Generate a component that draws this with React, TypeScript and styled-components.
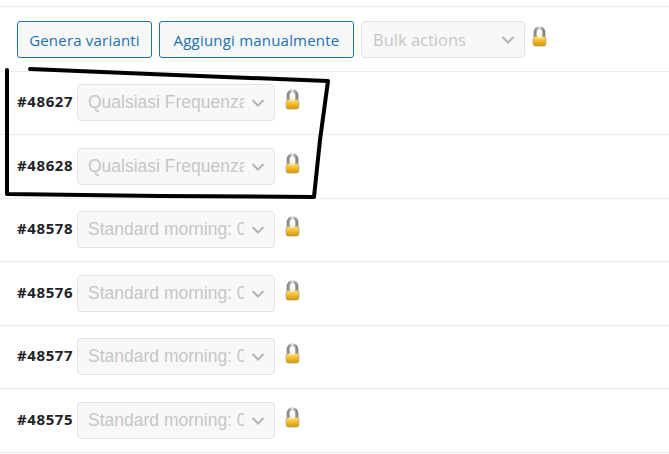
import { FC } from 'react';
import styled, { createGlobalStyle } from 'styled-components';

const GlobalStyle = createGlobalStyle`
  html, body {
    margin: 0;
    padding: 0;
    background: #fff;
    overflow: hidden;
  }
  body {
    font-family: "Open Sans", "Noto Sans", sans-serif;
  }
`

const Page = styled.div`
  position: relative;
  width: 669px;
  height: 454px;
  padding-top: 6px;
  box-sizing: border-box;
  overflow: hidden;
`
const Toolbar = styled.div`
  display: flex;
  align-items: flex-start;
  gap: 7px;
  height: 64.8px;
  box-sizing: border-box;
  padding: 14px 0 0 17px;
  border-top: 1px solid #ececec;
`
const ActionButton = styled.button<{ $width: number }>`
  width: ${({ $width }) => $width}px;
  height: 37px;
  padding: 0;
  border: 1px solid #2271b1;
  border-radius: 3px;
  background: #f6f7f7;
  color: #2271b1;
  font-family: "Open Sans", sans-serif;
  font-size: 15px;
  letter-spacing: 0.2px;
  white-space: nowrap;
`
const Row = styled.div`
  display: flex;
  align-items: flex-start;
  gap: 4px;
  height: 63.5px;
  box-sizing: border-box;
  padding: 12.5px 0 0 17px;
  border-top: 1px solid #ececec;
`
const VariantId = styled.span`
  width: 56px;
  height: 37px;
  line-height: 34px;
  font-size: 15px;
  font-weight: 700;
  letter-spacing: 0.6px;
  color: #1d2327;
  white-space: nowrap;
`
const SelectBox = styled.div<{ $width: number; $bulk?: boolean }>`
  position: relative;
  width: ${({ $width }) => $width}px;
  height: 37px;
  flex: none;
  box-sizing: border-box;
  padding-left: ${({ $bulk }) => ($bulk ? '11px' : '10px')};
  border: 1px solid #e2e2e2;
  border-radius: 4px;
  background: #f8f8f8;
  color: #c6c6c6;
  font-family: ${({ $bulk }) => ($bulk ? '"Open Sans", sans-serif' : '"Liberation Sans", sans-serif')};
  font-size: ${({ $bulk }) => ($bulk ? '16.5px' : '17.5px')};
  line-height: ${({ $bulk }) => ($bulk ? '36px' : '35px')};
`
const SelectText = styled.span`
  display: block;
  width: 156px;
  overflow: hidden;
  white-space: nowrap;
`
const Chevron = styled.svg`
  position: absolute;
  right: 9px;
  top: 13px;
  width: 14px;
  height: 10px;
`
const LockIcon = styled.svg<{ $left: number; $top: number }>`
  width: 15px;
  height: 21px;
  flex: none;
  margin-left: ${({ $left }) => $left}px;
  margin-top: ${({ $top }) => $top}px;
`
const Scribble = styled.svg`
  position: absolute;
  left: 0;
  top: 0;
  pointer-events: none;
`

const Lock: FC<{ left?: number; top?: number }> = ({ left = 6, top = 5 }) => (
  <LockIcon $left={left} $top={top} viewBox="0 0 15 21">
    <defs>
      <linearGradient id="shackle" x1="0" x2="1" y1="0" y2="0">
        <stop offset="0" stopColor="#8a8a8a" />
        <stop offset="0.3" stopColor="#b4b4b4" />
        <stop offset="0.5" stopColor="#e6e6e6" />
        <stop offset="0.7" stopColor="#b4b4b4" />
        <stop offset="1" stopColor="#858585" />
      </linearGradient>
      <linearGradient id="lockBody" x1="0" x2="0" y1="0" y2="1">
        <stop offset="0" stopColor="#f8e08a" />
        <stop offset="0.45" stopColor="#f5bd2a" />
        <stop offset="1" stopColor="#d2920c" />
      </linearGradient>
    </defs>
    <path d="M3.2 12.5V6.2a4.3 4.3 0 0 1 8.6 0v6.3" fill="none" stroke="url(#shackle)" strokeWidth="3.2" />
    <rect x="1" y="10.5" width="13" height="9.6" rx="2.6" fill="url(#lockBody)" stroke="#b5a77f" strokeWidth="0.7" />
    <path d="M7.5 6.8l2.6 4.7H4.9z" fill="#fff6cf" />
  </LockIcon>
);

const Select: FC<{ label: string; width?: number; bulk?: boolean }> = ({ label, width = 198, bulk }) => (
  <SelectBox $width={width} $bulk={bulk}>
    <SelectText>{label}</SelectText>
    <Chevron viewBox="0 0 14 10">
      <path d="M1.5 2l5.5 5.5L12.5 2" fill="none" stroke="#b4b4b4" strokeWidth="2" />
    </Chevron>
  </SelectBox>
);

const FREQUENCY = 'Qualsiasi Frequenza';
const MORNING = 'Standard morning: 08:00';

const VARIANTS = [
  { id: '#48627', label: FREQUENCY },
  { id: '#48628', label: FREQUENCY },
  { id: '#48578', label: MORNING },
  { id: '#48576', label: MORNING },
  { id: '#48577', label: MORNING },
  { id: '#48575', label: MORNING },
];

const App: FC = () => (
  <Page>
    <GlobalStyle />
    <Toolbar>
      <ActionButton $width={135}>Genera varianti</ActionButton>
      <ActionButton $width={195}>Aggiungi manualmente</ActionButton>
      <Select label="Bulk actions" width={164} bulk />
      <Lock left={0} top={5} />
    </Toolbar>
    {VARIANTS.map((variant) => (
      <Row key={variant.id}>
        <VariantId>{variant.id}</VariantId>
        <Select label={variant.label} />
        <Lock />
      </Row>
    ))}
    <Row />
    <Scribble width="669" height="454" viewBox="0 0 669 454">
      <path
        d="M30 69L150 74L328 81L320 140L314 197L160 196L7 194L7 70"
        fill="none"
        stroke="#000"
        strokeWidth="4"
        strokeLinejoin="round"
        strokeLinecap="round"
      />
    </Scribble>
  </Page>
);

export default App;
